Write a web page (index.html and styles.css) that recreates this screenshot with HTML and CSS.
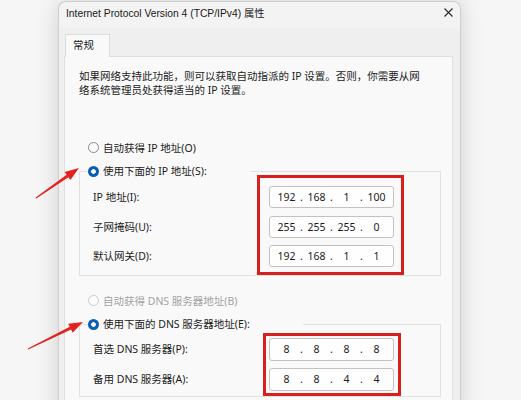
FILE: index.html
```html
<!DOCTYPE html>
<html lang="zh-CN">
<head>
<meta charset="utf-8">
<title>IPv4 属性</title>
<link rel="stylesheet" href="styles.css">
</head>
<body>
<div class="stage">
  <div class="window">
    <div class="titlebar">
      <span class="title">Internet Protocol Version 4 (TCP/IPv4) 属性</span>
      <svg class="close" width="9" height="9" viewBox="0 0 9 9"><path d="M0.5 0.5L8.5 8.5M8.5 0.5L0.5 8.5" stroke="#2b2b2b" stroke-width="1.1" fill="none"/></svg>
    </div>
    <div class="tabstrip"><div class="tab">常规</div></div>
    <div class="panel">
      <p class="desc">如果网络支持此功能，则可以获取自动指派的 IP 设置。否则，你需要从网<br>络系统管理员处获得适当的 IP 设置。</p>

      <div class="radio-row"><span class="radio"></span><span>自动获得 IP 地址(O)</span></div>
      <fieldset class="group group-ip">
        <legend class="legend legend-ip"><span class="radio on"></span><span>使用下面的 IP 地址(S):</span></legend>
        <div class="group-body body-ip">
          <div class="labels labels-ip">
            <span>IP 地址(I):</span>
            <span>子网掩码(U):</span>
            <span>默认网关(D):</span>
          </div>
          <div class="mark mark-ip">
            <div class="ipbox"><span>192</span><i>.</i><span>168</span><i>.</i><span>1</span><i>.</i><span>100</span></div>
            <div class="ipbox"><span>255</span><i>.</i><span>255</span><i>.</i><span>255</span><i>.</i><span>0</span></div>
            <div class="ipbox"><span>192</span><i>.</i><span>168</span><i>.</i><span>1</span><i>.</i><span>1</span></div>
          </div>
        </div>
      </fieldset>

      <div class="radio-row radio-row-dns disabled"><span class="radio"></span><span>自动获得 DNS 服务器地址(B)</span></div>
      <fieldset class="group group-dns">
        <legend class="legend legend-dns"><span class="radio on"></span><span>使用下面的 DNS 服务器地址(E):</span></legend>
        <div class="group-body body-dns">
          <div class="labels labels-dns">
            <span>首选 DNS 服务器(P):</span>
            <span>备用 DNS 服务器(A):</span>
          </div>
          <div class="mark mark-dns">
            <div class="ipbox tall"><span>8</span><i>.</i><span>8</span><i>.</i><span>8</span><i>.</i><span>8</span></div>
            <div class="ipbox tall"><span>8</span><i>.</i><span>8</span><i>.</i><span>4</span><i>.</i><span>4</span></div>
          </div>
        </div>
      </fieldset>
    </div>
  </div>

  <svg class="arrows" width="521" height="400" viewBox="0 0 521 400">
    <polygon fill="#e3221e" points="79,168 70.4,180.1 68.4,177.2 36.3,198.6 35.7,197.4 66.6,174.8 64.6,171.9"/>
    <polygon fill="#e3221e" points="83,322 72.6,332.7 71.1,329.5 28.2,349.6 27.8,348.4 69.8,326.8 68.2,323.7"/>
  </svg>
</div>
</body>
</html>
```

FILE: styles.css
```css
* { box-sizing: border-box; }

html, body {
  margin: 0;
  padding: 0;
}

body {
  width: 521px;
  height: 400px;
  overflow: hidden;
  background: #f6f6f6;
  font-family: "Noto Sans", "Noto Sans CJK SC", sans-serif;
  color: #1b1b1b;
}

.stage {
  position: relative;
  width: 521px;
  height: 400px;
  padding-left: 58px;
  padding-top: 1px;
}

.window {
  width: 403px;
  height: 420px;
  background: #efefef;
  border: 1px solid #cfcfcf;
  border-bottom: none;
  border-radius: 8px 8px 0 0;
  box-shadow: 0 0 22px rgba(0, 0, 0, 0.16);
  display: flex;
  flex-direction: column;
}

.titlebar {
  height: 26px;
  flex: none;
  display: flex;
  align-items: center;
  justify-content: space-between;
  padding: 0 7px 5px 7px;
  background: #f3f3f3;
  border-radius: 8px 8px 0 0;
}

.title {
  font-family: "Liberation Sans", "Noto Sans CJK SC", sans-serif;
  font-size: 10.3px;
  color: #1a1a1a;
  white-space: nowrap;
}

.close {
  display: block;
}

.tabstrip {
  height: 28px;
  flex: none;
  display: flex;
  align-items: flex-end;
  padding-left: 6px;
}

.tab {
  position: relative;
  width: 45px;
  height: 23px;
  margin-bottom: -1px;
  background: #f9f9f9;
  border: 1px solid #dcdcdc;
  border-bottom: none;
  font-size: 10.5px;
  line-height: 20px;
  padding-left: 7px;
  color: #1a1a1a;
}

.panel {
  flex: 1;
  margin: 0 7px 0 5px;
  background: #f9f9f9;
  border: 1px solid #e0e0e0;
  border-bottom: none;
  font-size: 10.5px;
}

.desc {
  margin: 12px 0 0 14px;
  line-height: 14px;
  white-space: nowrap;
}

.radio-row {
  display: flex;
  align-items: center;
  gap: 4px;
  height: 20px;
  margin-top: 40px;
  padding-left: 23px;
  white-space: nowrap;
}

.radio-row-dns {
  margin-top: 14px;
}

.disabled {
  color: #a3a3a3;
}

.radio {
  flex: none;
  width: 11px;
  height: 11px;
  border-radius: 50%;
  border: 1px solid #878787;
  background: #fdfdfd;
}

.disabled .radio {
  border-color: #c9c9c9;
}

.radio.on {
  border: none;
  background: radial-gradient(circle, #ffffff 0 2px, #0a5fb4 2.6px);
}

.group {
  margin: 8px 11px 0 14px;
  padding: 0 36px 0 8px;
  border: 1px solid #e1e1e1;
  min-width: 0;
}

.legend {
  display: flex;
  align-items: center;
  gap: 4px;
  padding: 0;
  height: 12px;
  line-height: 12px;
  white-space: nowrap;
  background: #f9f9f9;
}

.legend-ip { width: 162px; }
.legend-dns { width: 215px; }

.group-body {
  display: flex;
}

.body-ip { margin-top: -2px; }
.body-dns { margin-top: 3px; }

.labels {
  flex: none;
  display: flex;
  flex-direction: column;
  padding-left: 5px;
}

.labels span {
  height: 22px;
  line-height: 22px;
  white-space: nowrap;
}

.labels-ip {
  width: 169px;
  padding-top: 11px;
  gap: 7.5px;
}

.labels-dns {
  width: 175px;
  padding-top: 5px;
  gap: 7px;
}

.labels-dns span {
  height: 23px;
  line-height: 23px;
}

.mark {
  border: 3px solid #d91f1c;
  display: flex;
  flex-direction: column;
}

.mark-ip {
  padding: 8px 7px 5px 9px;
  gap: 7.5px;
}

.mark-dns {
  padding: 2px 4px 2px 3px;
  gap: 7px;
}

.ipbox {
  width: 125px;
  height: 22px;
  background: #fefefe;
  border: 1px solid #c2c2c2;
  border-radius: 3px;
  display: grid;
  grid-template-columns: 25px 5px 25px 5px 25px 5px 25px;
  padding-left: 4px;
  font-size: 10.5px;
  line-height: 20px;
  color: #1a1a1a;
}

.ipbox.tall {
  height: 23px;
  line-height: 21px;
}

.ipbox span {
  text-align: center;
}

.ipbox i {
  font-style: normal;
  text-align: center;
}

.arrows {
  position: absolute;
  left: 0;
  top: 0;
  pointer-events: none;
}
```
